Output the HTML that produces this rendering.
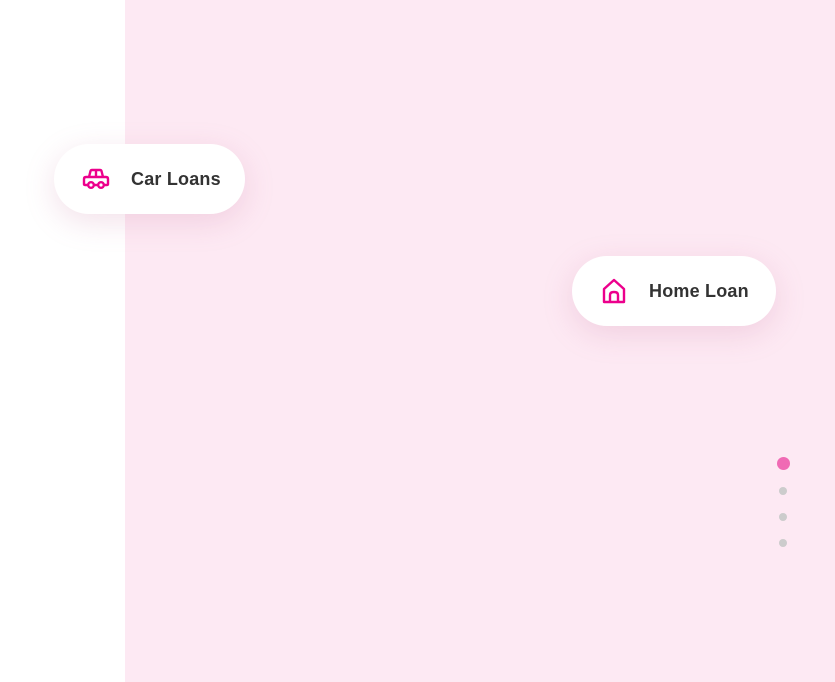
<!DOCTYPE html>
<html><head><style>
body{margin:0;width:835px;height:682px;position:relative;overflow:hidden;background:#fff;font-family:"Liberation Sans",sans-serif}
.bg{position:absolute;left:125px;top:0;width:710px;height:682px;background:#fde9f3}
.card{position:absolute;height:70px;border-radius:35px;background:#fff;box-shadow:0 8px 30px rgba(200,120,160,0.22);display:flex;align-items:center;font-weight:bold;font-size:18px;letter-spacing:0.2px;color:#333}
.card svg{position:absolute}
.card span{position:absolute}
.dot{position:absolute;border-radius:50%}
</style></head><body>
<div class="bg"></div>
<div class="card" style="left:54px;top:144px;width:191px">
<svg style="left:28px;top:24px" width="28" height="22" viewBox="0 0 28 22" fill="none" stroke="#ec008c" stroke-width="2.4" stroke-linejoin="round">
<path d="M7 9 L8.5 3 Q9 2 10 2 H18 Q19 2 19.5 3 L21 9"/><path d="M14 2 V9"/>
<path d="M7 17 H3 Q2 17 2 16 V11 Q2 9 4 9 H24 Q26 9 26 11 V16 Q26 17 25 17 H22 M16 17 H12"/>
<circle cx="9" cy="17" r="2.8"/><circle cx="19" cy="17" r="2.8"/></svg>
<span style="left:77px">Car Loans</span></div>
<div class="card" style="left:572px;top:256px;width:204px">
<svg style="left:29px;top:22px" width="26" height="27" viewBox="0 0 26 27" fill="none" stroke="#ec008c" stroke-width="2.4" stroke-linejoin="round">
<path d="M3 11 L13 2 L23 11 V24 H3 Z"/><path d="M9 24 V17 Q9 14 13 14 Q17 14 17 17 V24"/></svg>
<span style="left:77px">Home Loan</span></div>
<div class="dot" style="left:777px;top:457px;width:13px;height:13px;background:#f06ab4"></div>
<div class="dot" style="left:779px;top:487px;width:8px;height:8px;background:#ccc"></div>
<div class="dot" style="left:779px;top:513px;width:8px;height:8px;background:#ccc"></div>
<div class="dot" style="left:779px;top:539px;width:8px;height:8px;background:#ccc"></div>
</body></html>
